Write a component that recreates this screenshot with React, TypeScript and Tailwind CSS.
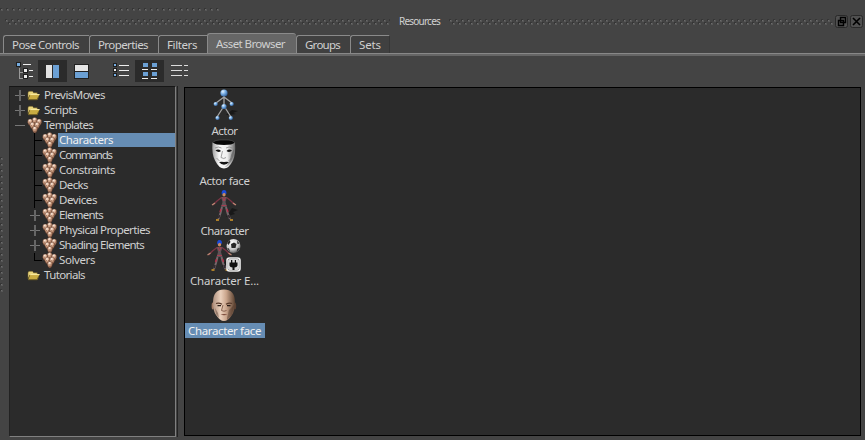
import { useLayoutEffect, useRef, useState } from "react";
import type { ReactNode } from "react";

/** Text whose tracking is adjusted so that it fills a given width. */
function Label({ text, w, className = "" }: { text: string; w: number; className?: string }) {
  const ref = useRef<HTMLSpanElement>(null);
  const [ls, setLs] = useState(0);
  useLayoutEffect(() => {
    if (ref.current) {
      const natural = ref.current.getBoundingClientRect().width;
      setLs((w - natural) / text.length);
    }
  }, [text, w]);
  return (
    <span ref={ref} className={`inline-block shrink-0 whitespace-pre ${className}`} style={{ letterSpacing: ls }}>
      {text}
    </span>
  );
}

function Grip({ w, h, id, single = false }: { w: number; h: number; id: string; single?: boolean }) {
  return (
    <svg width={w} height={h} className="block shrink-0" shapeRendering="crispEdges">
      <defs>
        <pattern id={id} width="6" height="6" patternUnits="userSpaceOnUse">
          <path d="M0 0h2v1H1v1H0z" fill="#363636" />
          <rect x="1" y="1" width="2" height="2" fill="#585858" />
          <rect x="1" y="1" width="1" height="1" fill="#6c6c6c" />
          {!single && <path d="M3 3h2v1H4v1H3z" fill="#363636" />}
          {!single && <rect x="4" y="4" width="2" height="2" fill="#585858" />}
          {!single && <rect x="4" y="4" width="1" height="1" fill="#6c6c6c" />}
        </pattern>
      </defs>
      <rect width={w} height={h} fill={`url(#${id})`} />
    </svg>
  );
}

function Tab({ text, w, tw, last = false }: { text: string; w: string; tw: number; last?: boolean }) {
  return (
    <div
      className={`${w} flex h-[18px] items-center rounded-tl-[3px] border-t border-l border-[#8a8a8a] bg-[#404040] pl-[8px] ${last ? "border-r border-r-[#363636]" : ""}`}
    >
      <Label text={text} w={tw} />
    </div>
  );
}

function Folder() {
  return (
    <svg width="14" height="13" viewBox="0 0 15 13" className="mr-[3px] mb-[1px] shrink-0">
      <path d="M1 3.500 2 2h4l1 1.500h4V6H3L1 10z" fill="#e9d57c" stroke="#5d4e1c" strokeWidth=".5" />
      <path d="M3.400 5.400h10L11 11H1.300z" fill="#c9ac42" />
      <path d="M3.500 5.500h10" stroke="#fff1a8" />
      <path d="M1.300 11H11l1.400-3.500" fill="none" stroke="#6d5c20" />
    </svg>
  );
}

function Head({ x, y, id }: { x: number; y: number; id: string }) {
  return (
    <g transform={`translate(${x} ${y})`}>
      <path d="M0-3.300Q2.700-3.300 2.500 0 2 3.200 0 3.600-2 3.200-2.500 0-2.700-3.300 0-3.300" fill={`url(#${id})`} stroke="#4a2c20" strokeWidth=".35" />
      <path d="M-1.300 0h.9M.6 0h.9M-.6 1.700H.6" stroke="#5a382a" strokeWidth=".5" />
    </g>
  );
}

function Heads() {
  return (
    <svg width="16" height="16" viewBox="0 0 16 16" className="shrink-0 overflow-visible">
      <defs>
        <radialGradient id="skin" cx=".4" cy=".2" r=".85">
          <stop offset="0" stopColor="#fff0e4" />
          <stop offset=".45" stopColor="#d2a284" />
          <stop offset="1" stopColor="#6a4230" />
        </radialGradient>
      </defs>
      <Head x={7.7} y={2.8} id="skin" />
      <Head x={3.2} y={4.2} id="skin" />
      <Head x={12.2} y={4.2} id="skin" />
      <Head x={5.4} y={7.6} id="skin" />
      <Head x={10.2} y={7.6} id="skin" />
      <Head x={7.9} y={11.7} id="skin" />
    </svg>
  );
}

function Expander({ open = false }: { open?: boolean }) {
  return (
    <svg width="15" height="15" className="shrink-0" shapeRendering="crispEdges">
      <path d="M3 7h10v1H3z" fill="#777" />
      {!open && <path d="M7 2h2v11H7z" fill="#666" />}
    </svg>
  );
}

function Branch({ last = false }: { last?: boolean }) {
  return (
    <svg width="15" height="15" className="shrink-0" shapeRendering="crispEdges">
      <path d={last ? "M7 0h1v7h7v1H7z" : "M7 0h1v7h7v1H8v7H7z"} fill="#000" />
    </svg>
  );
}

function Root({ text, tw, icon, exp }: { text: string; tw: number; icon: ReactNode; exp?: ReactNode }) {
  return (
    <div className="flex h-[15px] items-center pl-[2px]">
      {exp ?? <span className="w-[15px]" />}
      <span className="flex w-[17px] shrink-0 items-center justify-start">{icon}</span>
      <Label text={text} w={tw} className="mb-[2px]" />
    </div>
  );
}

function Child({ text, tw, kind, selected = false }: { text: string; tw: number; kind: "plus" | "line" | "last"; selected?: boolean }) {
  return (
    <div className="flex h-[15px] items-center pl-[17px]">
      {kind === "plus" ? <Expander /> : <Branch last={kind === "last"} />}
      <span className="flex w-[16px] shrink-0 items-center">
        <Heads />
      </span>
      <div className={`mb-[1px] flex h-[14px] flex-1 items-center pl-[1px] ${selected ? "bg-[#668db4] text-[#f0f0f0]" : ""}`}>
        <Label text={text} w={tw} className="mb-[1px]" />
      </div>
    </div>
  );
}

function ActorIcon() {
  return (
    <svg width="34" height="34" viewBox="0 0 34 34">
      <defs>
        <radialGradient id="ball" cx=".35" cy=".3" r=".75">
          <stop offset="0" stopColor="#e6f4ff" />
          <stop offset=".45" stopColor="#7cb1e6" />
          <stop offset="1" stopColor="#2c5c99" />
        </radialGradient>
      </defs>
      <path d="M19 27l6-5 6 1-5 2 3 1-7 1z" fill="#171717" />
      <path d="M17 6v12M17 9l-8 6M17 9l8 6M17 18l-7 11M17 18l7 11" stroke="#a4a4a4" strokeWidth="1.300" fill="none" />
      <g fill="url(#ball)">
        <circle cx="17" cy="5" r="3.600" />
        <circle cx="8.700" cy="16" r="2.100" />
        <circle cx="24.700" cy="16" r="2.100" />
        <circle cx="17" cy="18.500" r="2.600" />
        <circle cx="10.500" cy="30" r="2.100" />
        <circle cx="23.800" cy="30" r="2.100" />
      </g>
    </svg>
  );
}

function MaskIcon() {
  return (
    <svg width="34" height="34" viewBox="0 0 34 34">
      <defs>
        <linearGradient id="mask">
          <stop offset="0" stopColor="#a0a0a0" />
          <stop offset=".3" stopColor="#f8f8f8" />
          <stop offset=".65" stopColor="#f0f0f0" />
          <stop offset="1" stopColor="#666" />
        </linearGradient>
      </defs>
      <path d="M5.500 5Q7 1.500 17 2q9.500-.5 11 3-1 3-11 3T5.500 5" fill="#080808" stroke="#666" strokeWidth=".5" />
      <path d="M5.500 4.500q3 2.500 11.500 2.500T28 4.500q1 11.500-2 18-4 8-9 8t-9-8Q4.500 16 5.500 4.500" fill="url(#mask)" />
      <path d="M8.500 12.500q3-2 5.500.5-2.500 2-5.500-.5M19.500 13q2.500-2.500 5.500-.5-2.500 2.500-5.500.5M12 24q2.500-.7 5 0 2.500-.7 5 0-2 2.700-5 2.700T12 24" fill="#141414" />
      <path d="M15.500 13l-1.500 6.500q3 2 5 0M9.500 20l3 3M24.500 20l-3 3M8 10q3.500-2 6.500 0M19 10q3-2 6.500 0" fill="none" stroke="#8c8c8c" strokeWidth=".8" />
      <path d="M24 17l3-6q0 9-4 14-3 4-5 4 5-4 6-12" fill="#444" opacity=".45" />
    </svg>
  );
}

function Figure() {
  return (
    <g transform="translate(0 1)">
      <path d="M19 28l6-9 6 2-5 2 2 2-7 2z" fill="#181818" />
      <path d="M14.500 8.500 10 12l-4 4M19.500 8.500 24 12l4 4" stroke="#7d3444" strokeWidth="1.300" fill="none" />
      <path d="M8 14l-3 2M26 14l3 2" stroke="#bd8a74" strokeWidth="1.200" fill="none" />
      <path d="M14 8h6l-1.500 5 1.500 5h-6l1.500-5z" fill="#605357" />
      <path d="M15.500 8l1.500 4 1.500-4M14.500 16.500h5" stroke="#a83c50" fill="none" />
      <path d="M15 18l-1.500 6-2 6M19 18l1.500 6 2.500 6" stroke="#76676b" strokeWidth="2" fill="none" />
      <path d="M14 20l-1 3M20 20l1 3" stroke="#b52f49" strokeWidth="1.400" />
      <path d="M12.500 26l-1 3M21.500 26l1 3" stroke="#332b30" strokeWidth="1.800" />
      <path d="M9 31h3M23 31h3" stroke="#d69b2a" strokeWidth="1.700" />
      <ellipse cx="17" cy="5" rx="1.700" ry="2.600" fill="#c98c66" />
      <path d="M14.800 5.500Q14 1 17 1t2.300 4L17 3.700z" fill="#1a4ad8" />
    </g>
  );
}

function CharacterIcon() {
  return (
    <svg width="34" height="34" viewBox="0 0 34 34">
      <Figure />
    </svg>
  );
}

function ExtendedIcon() {
  return (
    <svg width="34" height="34" viewBox="0 0 34 34" className="overflow-visible">
      <defs>
        <radialGradient id="soccer" cx=".4" cy=".3" r=".75">
          <stop offset="0" stopColor="#fff" />
          <stop offset=".6" stopColor="#c8c8c8" />
          <stop offset="1" stopColor="#555" />
        </radialGradient>
      </defs>
      <g transform="translate(-4.500 0)">
        <Figure />
      </g>
      <circle cx="26.500" cy="8" r="7" fill="url(#soccer)" />
      <path d="M24 6l3-1.500L29.500 6l-1 4h-4zM20 5l2.500-3 1 2-2 3zM30 2.500l2.500 3-2 .5zM20 10l2 .5 1 3.500zM33 10l-2.500.5-1 3.500z" fill="#262626" />
      <rect x="20" y="20" width="13" height="13" rx="2.500" fill="#333" stroke="#f1f1f1" strokeWidth="1.600" />
      <rect x="21" y="21" width="11" height="11" rx="1.500" fill="#d6d6d6" />
      <path d="M22.500 24.500h8v3q-.5 2-3 2V32h-2v-2.500q-2.500 0-3-2zM24 22h1.300v3H24zM27.800 22H29v3h-1.200z" fill="#111" />
    </svg>
  );
}

function FaceIcon() {
  return (
    <svg width="34" height="34" viewBox="0 0 34 34">
      <defs>
        <linearGradient id="face">
          <stop offset="0" stopColor="#b09280" />
          <stop offset=".35" stopColor="#ead0bc" />
          <stop offset=".6" stopColor="#cba68d" />
          <stop offset="1" stopColor="#59402f" />
        </linearGradient>
      </defs>
      <ellipse cx="5.800" cy="18" rx="1.200" ry="3.500" fill="#a27b65" />
      <ellipse cx="28" cy="18" rx="1.200" ry="3.500" fill="#5a4033" />
      <path d="M17 1.500q11 0 11 13 0 8-3 12.500-4 6-8 6t-8-6q-3-4-3-12.500 0-13 11-13" fill="url(#face)" />
      <path d="M9 15.500q3-1 6 .8M19 16.300q3-1.800 6-.8" stroke="#57392a" strokeWidth="1.300" fill="none" />
      <path d="M10.500 17.700h3.500M20 17.700h3.500" stroke="#2a1c17" strokeWidth="1.300" />
      <path d="M16 17l-1.500 5.500q2.500 1.500 5 0" fill="none" stroke="#7f5946" strokeWidth=".9" />
      <path d="M13.500 26.500q3.500-1.200 7 0-3.500 1.500-7 0" fill="#7c4c3c" />
      <path d="M20 30l2-8 5-5-2 10-5 5zM8 20l3 5 1 5-3-4z" fill="#493024" opacity=".4" />
    </svg>
  );
}

function Asset({ text, tw, icon, selected = false }: { text: string; tw: number; icon: ReactNode; selected?: boolean }) {
  return (
    <div className="flex h-[50px] w-[80px] flex-col items-center">
      <div className="h-[35px] pr-[2px]">{icon}</div>
      <div className={`flex h-[15px] w-full items-center justify-center pr-[1px] ${selected ? "bg-[#668db4] text-[#f0f0f0]" : ""}`}>
        <Label text={text} w={tw} />
      </div>
    </div>
  );
}

function Toolbar() {
  return (
    <div className="flex h-[23px] pl-[9px]">
      <svg width="29" height="22" shapeRendering="crispEdges">
        <path d="M10 7v11h5M10 12h5" transform="translate(.5 .5)" fill="none" stroke="#999" />
        <path d="M7 2h5v5H7zM14 8h5v5h-5zM14 14h5v5h-5z" fill="#202020" />
        <path d="M8 3h3v3H8z" fill="#75ace0" />
        <path d="M15 9h3v3h-3zM15 15h3v3h-3zM14 4h8v1h-8zM20 10h4v1h-4zM20 16h4v1h-4z" fill="#eee" />
      </svg>
      <svg width="29" height="22" shapeRendering="crispEdges" className="bg-[#2b2b2b]">
        <path d="M8 5h6v13H8z" fill="#e2e2e2" />
        <path d="M15 5h6v13h-6z" fill="#6ba0d4" />
      </svg>
      <svg width="29" height="22" shapeRendering="crispEdges">
        <path d="M7 4h15v15H7z" fill="#222" />
        <path d="M8 5h13v6H8z" fill="#e6e6e6" />
        <path d="M8 12h13v6H8z" fill="#6ba0d4" />
      </svg>
      <svg width="39" height="22" shapeRendering="crispEdges">
        <path d="M17 3h4v4h-4zM17 8h4v4h-4zM17 13h4v4h-4z" fill="#202020" />
        <path d="M18 4h2v2h-2zM18 14h2v2h-2z" fill="#75ace0" />
        <path d="M18 9h2v2h-2zM23 5h10v1H23zM23 10h10v1H23zM23 15h10v1H23z" fill="#eee" />
      </svg>
      <svg width="29" height="22" shapeRendering="crispEdges" className="bg-[#2b2b2b]">
        <path d="M8 3h5v4H8zM17 3h5v4h-5zM8 12h5v4H8zM17 12h5v4h-5z" fill="#6ba0d4" />
        <path d="M7 9h6v1H7zM16 9h6v1h-6zM7 18h6v1H7zM16 18h6v1h-6z" fill="#eee" />
      </svg>
      <svg width="29" height="22" shapeRendering="crispEdges">
        <path d="M7 5h11v1H7zM20 5h4v1h-4zM7 10h11v1H7zM20 10h4v1h-4zM7 15h11v1H7zM20 15h4v1h-4z" fill="#ddd" />
      </svg>
    </div>
  );
}

export default function App() {
  return (
    <div className="flex h-[440px] w-[865px] flex-col overflow-hidden bg-[#444444] font-['Noto_Sans','Open_Sans',sans-serif] text-[11.5px] leading-[15px] text-[#d0d0d0]">
      <div className="flex h-[14px] shrink-0 items-start pt-[8px]">
        <Grip w={222} h={3} id="g1" single />
      </div>
      <div className="flex h-[14px] shrink-0 items-center pt-[1px] pl-[5px]">
        <Grip w={385} h={6} id="g2" />
        <div className="flex w-[59px] justify-center text-[10px]">
          <Label text="Resources" w={41} />
        </div>
        <Grip w={384} h={6} id="g3" />
        <svg width="30" height="14" className="ml-[2px] block shrink-0">
          <rect x=".5" y=".5" width="12" height="12" rx="2" fill="#505050" stroke="#292929" />
          <path d="M5.500 2.500h5v5h-5zM3.500 5.500h5v5h-5z" fill="#505050" stroke="#000" strokeWidth="1.400" />
          <rect x="15.500" y=".5" width="12" height="12" rx="2" fill="#505050" stroke="#292929" />
          <path d="M18 3l7 7M25 3l-7 7" stroke="#000" strokeWidth="1.600" />
        </svg>
      </div>
      <div className="flex h-[25px] shrink-0 items-end pl-[3px]">
        <Tab text="Pose Controls" w="w-[86px]" tw={67} />
        <Tab text="Properties" w="w-[69px]" tw={50} />
        <Tab text="Filters" w="w-[49px]" tw={30} />
        <div className="flex h-[20px] w-[89px] items-center rounded-t-[3px] border-t border-l border-[#8a8a8a] bg-[#666666] pl-[8px]">
          <Label text="Asset Browser" w={69} />
        </div>
        <Tab text="Groups" w="w-[54px]" tw={35} />
        <Tab text="Sets" w="w-[40px]" tw={22} last />
      </div>
      <div className="h-[3px] shrink-0 border-t border-[#888888] bg-[#666666]" />
      <div className="h-[4px] shrink-0" />
      <Toolbar />
      <div className="mt-[3px] flex h-[351px]">
        <div className="flex w-[9px] items-start pt-[71px]">
          <Grip w={3} h={138} id="g4" single />
        </div>
        <div className="flex w-[167px] flex-col border border-t-[#161616] border-r-[#808080] border-b-[#808080] border-l-[#222] bg-[#2b2b2b] pt-[1px]">
          <Root text="PrevisMoves" tw={61} icon={<Folder />} exp={<Expander />} />
          <Root text="Scripts" tw={33} icon={<Folder />} exp={<Expander />} />
          <Root text="Templates" tw={49} icon={<Heads />} exp={<Expander open />} />
          <Child text="Characters" tw={54} kind="line" selected />
          <Child text="Commands" tw={53} kind="line" />
          <Child text="Constraints" tw={56} kind="line" />
          <Child text="Decks" tw={29} kind="line" />
          <Child text="Devices" tw={38} kind="line" />
          <Child text="Elements" tw={44} kind="plus" />
          <Child text="Physical Properties" tw={91} kind="plus" />
          <Child text="Shading Elements" tw={85} kind="plus" />
          <Child text="Solvers" tw={36} kind="last" />
          <Root text="Tutorials" tw={41} icon={<Folder />} />
        </div>
        <div className="w-[8px] border-l border-[#444]">
          <div className="h-full border-l border-[#222]" />
        </div>
        <div className="mt-[1px] h-[349px] w-[677px] border border-black bg-[#2b2b2b]">
          <Asset text="Actor" tw={26} icon={<ActorIcon />} />
          <Asset text="Actor face" tw={50} icon={<MaskIcon />} />
          <Asset text="Character" tw={48} icon={<CharacterIcon />} />
          <Asset text="Character E..." tw={69} icon={<ExtendedIcon />} />
          <Asset text="Character face" tw={73} icon={<FaceIcon />} selected />
        </div>
      </div>
    </div>
  );
}
